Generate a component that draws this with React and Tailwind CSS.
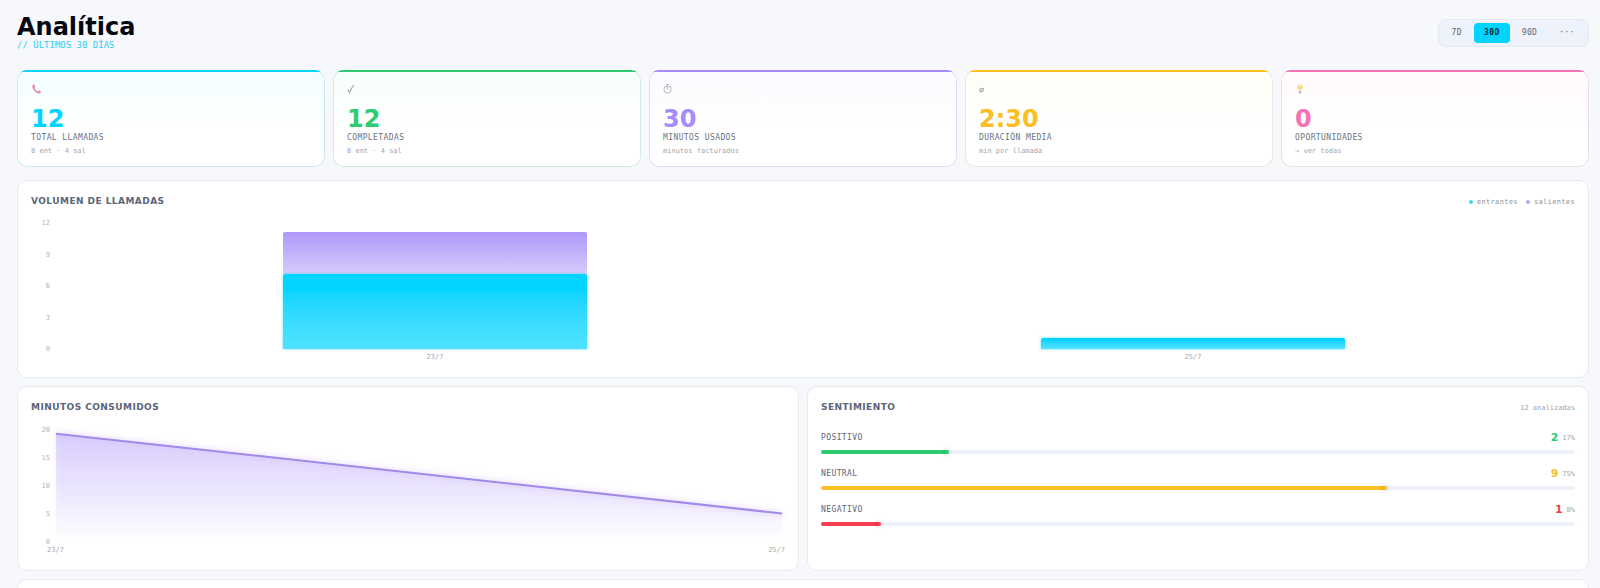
import { useState } from "react";

const PERIODS = ["7D", "30D", "90D", "···"];

const PhoneIcon = () => (
  <svg viewBox="0 0 10 10" className="h-2.5 w-2.5">
    <path
      d="M2.300.5 1.300 1.300C.8 4.900 4.800 9.600 8.800 9.400l1.200-.9c.2-.3.1-.6-.1-.8L8.300 6.600c-.3-.2-.6-.1-.8.1l-.6.7C5.400 6.900 3.800 5.100 3.500 3.700l.6-.5c.3-.2.3-.5.2-.8L3.300.7C3.100.4 2.600.3 2.300.5Z"
      fill="#d0457c"
    />
  </svg>
);

const CheckIcon = () => (
  <svg viewBox="0 0 10 10" className="h-2.5 w-2.5" fill="none" stroke="#1e293b">
    <path d="M1 6.200 2.600 8.700Q4 4.500 6.600 1.200" strokeWidth=".9" />
    <path d="M.8 6.500 1.800 5.700" strokeWidth=".8" />
  </svg>
);

const TimerIcon = () => (
  <svg viewBox="0 0 10 10" className="h-2.5 w-2.5" fill="none" stroke="#475569" strokeWidth=".7">
    <circle cx="4.500" cy="5.500" r="3.600" />
    <path d="M4.500 1.900V.6M3.300.5h2.400M7.200 3l.9-.9M4.500 5.500V3" />
  </svg>
);

const AverageIcon = () => (
  <svg viewBox="0 0 10 10" className="h-2.5 w-2.5" fill="none" stroke="#1e293b" strokeWidth=".7">
    <circle cx="2.600" cy="6" r="1.800" />
    <path d="M.5 8.200 4.700 3.800" />
  </svg>
);

const BulbIcon = () => (
  <svg viewBox="0 0 10 10" className="h-2.5 w-2.5">
    <path d="M5 .3a2.900 2.900 0 0 0-1.800 5.200c.5.5.6 1 .7 1.500h2.200c.1-.5.2-1 .7-1.500A2.900 2.900 0 0 0 5 .3Z" fill="#fbc853" />
    <path d="M4.200 2.200c.3-.5.9-.7 1.400-.5" stroke="#fff" strokeWidth=".6" fill="none" />
    <path d="M3.900 7.200h2.200v1.600l-.6.8h-1l-.6-.8Z" fill="#64748b" />
  </svg>
);

const STATS = [
  {
    label: "Total llamadas",
    value: "12",
    note: "8 ent · 4 sal",
    Icon: PhoneIcon,
    bar: "bg-[#00d4ff]",
    text: "text-[#00d4ff]",
    card: "from-[#f3feff] shadow-[inset_0_0_0_1px_#c9e9f3]",
  },
  {
    label: "Completadas",
    value: "12",
    note: "8 ent · 4 sal",
    Icon: CheckIcon,
    bar: "bg-[#2ecc71]",
    text: "text-[#2ecc71]",
    card: "from-[#f6fef9] shadow-[inset_0_0_0_1px_#cfe9e4]",
  },
  {
    label: "Minutos usados",
    value: "30",
    note: "minutos facturados",
    Icon: TimerIcon,
    bar: "bg-[#a78bfa]",
    text: "text-[#a78bfa]",
    card: "from-[#fbfaff] shadow-[inset_0_0_0_1px_#dfdcf3]",
  },
  {
    label: "Duración media",
    value: "2:30",
    note: "min por llamada",
    Icon: AverageIcon,
    bar: "bg-[#fbbf24]",
    text: "text-[#fbbf24]",
    card: "from-[#fffdf6] shadow-[inset_0_0_0_1px_#e9e6dc]",
  },
  {
    label: "Oportunidades",
    value: "0",
    note: "→ ver todas",
    href: "#oportunidades",
    Icon: BulbIcon,
    bar: "bg-[#f472b6]",
    text: "text-[#f472b6]",
    card: "from-[#fff9fc] shadow-[inset_0_0_0_1px_#ebdfe8]",
  },
];

const VOLUME = [
  { day: "23/7", incoming: 7, outgoing: 4 },
  { day: "25/7", incoming: 1, outgoing: 0 },
];

const MINUTES = [
  { day: "23/7", value: 19 },
  { day: "25/7", value: 5 },
];

const SENTIMENT = [
  { label: "Positivo", count: 2, percent: 17, bar: "bg-[#2ecc71]", text: "text-[#2ecc71]" },
  { label: "Neutral", count: 9, percent: 75, bar: "bg-[#fbbf24]", text: "text-[#fbbf24]" },
  { label: "Negativo", count: 1, percent: 8, bar: "bg-[#f43f4f]", text: "text-[#f43f4f]" },
];

const Panel = ({ title, aside, children }) => (
  <section className="min-w-0 rounded-[10px] border border-[#e6eaf1] bg-white px-[13px] pt-3.5 pb-4">
    <div className="flex h-3.5 items-center justify-between">
      <h2 className="font-['DejaVu_Sans',sans-serif] text-[9px] font-bold tracking-wider text-[#5b6577] uppercase">
        {title}
      </h2>
      {aside}
    </div>
    {children}
  </section>
);

const YAxis = ({ ticks }) => (
  <div className="-mt-0.5 -mb-1 mr-1.5 flex w-[19px] flex-col justify-between text-right text-[7px] leading-2 text-[#b4b4b8]">
    {ticks.map((tick) => (
      <span key={tick}>{tick}</span>
    ))}
  </div>
);

const StatCard = ({ stat }) => (
  <article className={`relative overflow-hidden rounded-[10px] bg-white bg-linear-to-b to-white to-60% px-3.5 pt-3.5 pb-[11px] ${stat.card}`}>
    <div className={`absolute inset-x-0 top-0 h-0.5 ${stat.bar}`} />
    <div className="opacity-60">
      <stat.Icon />
    </div>
    <p className={`mt-[13px] font-['DejaVu_Sans',sans-serif] text-2xl leading-6 font-bold ${stat.text}`}>{stat.value}</p>
    <h3 className="mt-0.5 text-[8px] leading-2.5 tracking-wider text-[#6b7280] uppercase">{stat.label}</h3>
    <p className="mt-[3px] text-[7px] leading-2.5 text-[#a0a4ac]">
      {stat.href ? <a href={stat.href}>{stat.note}</a> : stat.note}
    </p>
  </article>
);

const VolumeChart = () => {
  const max = 12;
  return (
    <div className="mt-3 flex h-32">
      <YAxis ticks={[12, 9, 6, 3, 0]} />
      <div className="mr-[3px] flex flex-1">
        {VOLUME.map((d) => (
          <div key={d.day} className="flex h-32 flex-1 flex-col items-center justify-end">
            <div
              className="w-2/5 rounded-t-xs bg-linear-to-b from-[#af98f9] to-[#d7cbfc]"
              style={{ height: `${(d.outgoing / max) * 100}%` }}
            />
            <div
              className="w-2/5 rounded-t-xs bg-linear-to-b from-[#00d4ff] from-20% to-[#50e2ff] shadow-[0_0_3px_#00d4ff99]"
              style={{ height: `${(d.incoming / max) * 100}%` }}
            />
          </div>
        ))}
      </div>
    </div>
  );
};

const MinutesChart = () => {
  const max = 20;
  const start = 100 - (MINUTES[0].value / max) * 100;
  const end = 100 - (MINUTES[1].value / max) * 100;
  return (
    <>
      <div className="mt-[13px] flex h-[114px]">
        <YAxis ticks={[20, 15, 10, 5, 0]} />
        <svg
          viewBox="0 0 100 100"
          preserveAspectRatio="none"
          className="mr-[3px] h-full min-w-0 flex-1 overflow-visible drop-shadow-[0_0_3px_#a78bfa80]"
        >
          <defs>
            <linearGradient id="minutes" x1="0" y1="0" x2="0" y2="1">
              <stop offset="0" stopColor="#a78bfa" stopOpacity=".32" />
              <stop offset="1" stopColor="#a78bfa" stopOpacity="0" />
            </linearGradient>
          </defs>
          <path d={`M0 ${start}L100 ${end}V100H0Z`} fill="url(#minutes)" />
          <path
            d={`M0 ${start}L100 ${end}`}
            fill="none"
            stroke="#a18ae8"
            strokeWidth="2"
            vectorEffect="non-scaling-stroke"
          />
        </svg>
      </div>
      <div className="mt-1 ml-4 flex justify-between text-[7px] leading-2 text-[#a8a8ac]">
        {MINUTES.map((d) => (
          <span key={d.day}>{d.day}</span>
        ))}
      </div>
    </>
  );
};

const App = () => {
  const [period, setPeriod] = useState("30D");

  return (
    <main className="min-h-screen bg-[#f6f8fc] pt-[15px] pr-[11px] pl-[17px] font-['DejaVu_Sans_Mono','Liberation_Mono',monospace]">
      <header className="flex items-center justify-between">
        <div>
          <h1 className="font-['DejaVu_Sans',sans-serif] text-2xl leading-6 font-bold text-[#05080f]">Analítica</h1>
          <p className="text-[9px] leading-3 text-[#2fcdf2] uppercase">// Últimos 30 días</p>
        </div>
        <div className="flex gap-0.5 rounded-lg border border-[#e3e8f1] bg-[#eef2fa] p-[3px]">
          {PERIODS.map((p) => (
            <button
              key={p}
              type="button"
              onClick={() => setPeriod(p)}
              className={`h-5 rounded-sm px-2.5 text-[8px] tracking-wider ${
                p === period ? "bg-[#00d4ff] font-bold text-[#062a38]" : "text-[#5b6577]"
              }`}
            >
              {p}
            </button>
          ))}
        </div>
      </header>

      <div className="mt-[19px] grid grid-cols-5 gap-2">
        {STATS.map((stat) => (
          <StatCard key={stat.label} stat={stat} />
        ))}
      </div>

      <div className="mt-[13px] grid grid-cols-2 gap-2">
        <div className="col-span-2 grid">
          <Panel
            title="Volumen de llamadas"
            aside={
              <div className="flex gap-2 text-[7px] tracking-wider text-[#8d939e]">
                <span className="flex items-center gap-1">
                  <i className="h-1 w-1 rounded-full bg-[#3edaf8]" />
                  entrantes
                </span>
                <span className="flex items-center gap-1">
                  <i className="h-1 w-1 rounded-full bg-[#b9a5f5]" />
                  salientes
                </span>
              </div>
            }
          >
            <VolumeChart />
            <div className="mt-1 mr-[3px] ml-[25px] flex text-center text-[7px] leading-2 text-[#a8a8ac]">
              {VOLUME.map((d) => (
                <span key={d.day} className="flex-1">
                  {d.day}
                </span>
              ))}
            </div>
          </Panel>
        </div>

        <Panel title="Minutos consumidos">
          <MinutesChart />
        </Panel>

        <Panel title="Sentimiento" aside={<span className="text-[7px] text-[#a0a4ac]">12 analizadas</span>}>
          <div className="mt-[17px] flex flex-col gap-3.5">
            {SENTIMENT.map((s) => (
              <div key={s.label}>
                <div className="flex h-3 items-center justify-between">
                  <span className="text-[8px] tracking-wider text-[#5b6577] uppercase">{s.label}</span>
                  <span className="flex items-center gap-1 text-[7px] text-[#a0a4ac]">
                    <b className={`font-['DejaVu_Sans',sans-serif] text-[11px] leading-3 ${s.text}`}>{s.count}</b>
                    {s.percent}%
                  </span>
                </div>
                <div className="mt-1.5 h-1 rounded-full bg-[#edf1f9]">
                  <div className={`flex h-1 justify-end rounded-full ${s.bar}`} style={{ width: `${s.percent}%` }}>
                    <div className="h-1 w-1 rounded-full shadow-[0_0_4px_#00000059]" />
                  </div>
                </div>
              </div>
            ))}
          </div>
        </Panel>

        <section className="col-span-2 h-[9px] rounded-t-[10px] border border-b-0 border-[#e6eaf1] bg-white" />
      </div>
    </main>
  );
};

export default App;
